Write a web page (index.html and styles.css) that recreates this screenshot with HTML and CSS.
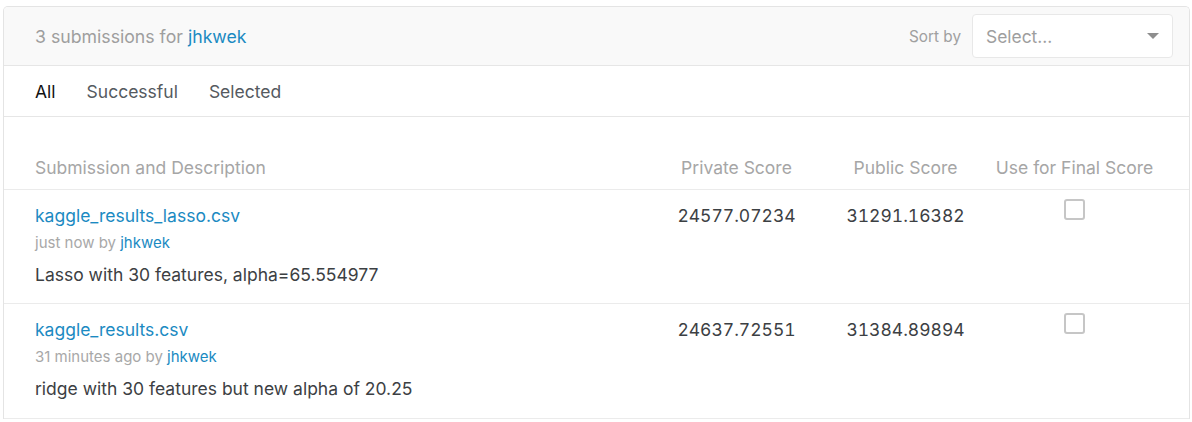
FILE: index.html
```html
<!DOCTYPE html>
<html>
<head>
<meta charset="utf-8">
<link rel="stylesheet" href="styles.css">
</head>
<body>
<div class="card">
  <div class="card-header">
    <div class="title">3 submissions for <a class="link" href="#">jhkwek</a></div>
    <div class="sort">
      <span class="sort-label">Sort by</span>
      <div class="select">
        <span class="placeholder">Select...</span>
        <span class="caret"></span>
      </div>
    </div>
  </div>
  <div class="tabs">
    <span class="tab active">All</span>
    <span class="tab">Successful</span>
    <span class="tab">Selected</span>
  </div>
  <div class="grid head">
    <div class="col-desc">Submission and Description</div>
    <div class="col">Private Score</div>
    <div class="col">Public Score</div>
    <div class="col">Use for Final Score</div>
  </div>
  <div class="grid row">
    <div class="col-desc">
      <a class="link file" href="#">kaggle_results_lasso.csv</a>
      <div class="meta">just now by <a class="link" href="#">jhkwek</a></div>
      <div class="desc">Lasso with 30 features, alpha=65.554977</div>
    </div>
    <div class="col score">24577.07234</div>
    <div class="col score">31291.16382</div>
    <div class="col"><span class="checkbox"></span></div>
  </div>
  <div class="grid row last">
    <div class="col-desc">
      <a class="link file" href="#">kaggle_results.csv</a>
      <div class="meta">31 minutes ago by <a class="link" href="#">jhkwek</a></div>
      <div class="desc">ridge with 30 features but new alpha of 20.25</div>
    </div>
    <div class="col score">24637.72551</div>
    <div class="col score">31384.89894</div>
    <div class="col"><span class="checkbox"></span></div>
  </div>
</div>
</body>
</html>
```
FILE: styles.css
```css
html, body {
  margin: 0;
  padding: 0;
  background: #ffffff;
}
body {
  font-family: Inter, "Noto Sans", sans-serif;
  color: #3c4043;
}
.card {
  margin: 6px 2px 0 3px;
  border: 1px solid #e4e4e4;
  border-bottom: none;
  border-radius: 5px 5px 0 0;
  overflow: hidden;
}
.card-header {
  height: 58px;
  background: #f9f9f9;
  border-bottom: 1px solid #e6e6e6;
  display: flex;
  align-items: center;
  justify-content: space-between;
  padding: 0 16px 0 31px;
}
.title {
  font-size: 17.7px;
  color: #9e9e9e;
}
.link {
  color: #1b8ac2;
  text-decoration: none;
}
.sort {
  display: flex;
  align-items: center;
  gap: 11px;
}
.sort-label {
  font-size: 15.3px;
  color: #a0a0a0;
}
.select {
  width: 201px;
  height: 44px;
  box-sizing: border-box;
  background: #ffffff;
  border: 1px solid #e8e8e8;
  border-radius: 4px;
  display: flex;
  align-items: center;
  justify-content: space-between;
  padding: 0 13px 0 13px;
}
.placeholder {
  font-size: 17.4px;
  color: #9e9e9e;
}
.caret {
  width: 0;
  height: 0;
  border-left: 6px solid transparent;
  border-right: 6px solid transparent;
  border-top: 6px solid #8e8e8e;
}
.tabs {
  height: 50px;
  border-bottom: 1px solid #e6e6e6;
  display: flex;
  align-items: center;
  padding: 0 31px;
  gap: 31px;
  font-size: 17.5px;
  color: #555a5f;
}
.tab.active {
  color: #111111;
}
.grid {
  display: grid;
  grid-template-columns: 1fr 169px 169px 169px;
  padding: 0 30px 0 31px;
  border-bottom: 1px solid #ebebeb;
}
.head {
  padding-top: 39px;
  height: 33px;
  font-size: 17.5px;
  color: #a6a6a6;
  line-height: 24px;
}
.col {
  text-align: center;
}
.row {
  padding-top: 14px;
  padding-bottom: 16px;
  height: 83px;
}
.row.last {
  padding-top: 14px;
  padding-bottom: 16px;
  height: 84px;
}
.file {
  display: block;
  font-size: 17.5px;
  line-height: 24px;
}
.meta {
  margin-top: 5px;
  font-size: 15px;
  line-height: 20px;
  color: #a8a8a8;
}
.desc {
  margin-top: 10px;
  font-size: 17.5px;
  line-height: 24px;
  color: #3c4043;
}
.score {
  font-size: 17.5px;
  line-height: 24px;
  color: #3c4043;
  font-feature-settings: "tnum" 1;
}
.checkbox {
  display: inline-block;
  width: 21px;
  height: 21px;
  box-sizing: border-box;
  border: 2px solid #c6c6c6;
  border-radius: 3px;
  margin-top: -6px;
}
```
